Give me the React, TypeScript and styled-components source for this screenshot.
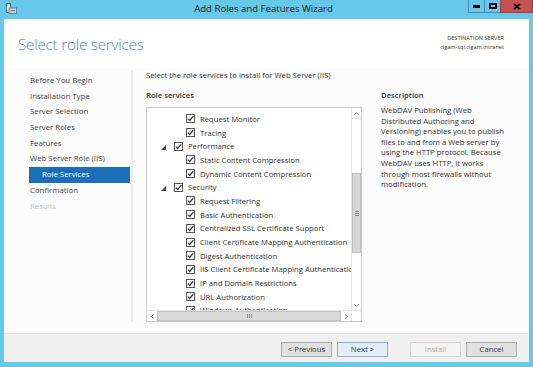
import { createGlobalStyle, styled } from "styled-components";

const GlobalStyle = createGlobalStyle`
  html, body {
    margin: 0;
    padding: 0;
    background: #66c9ea;
  }
  body {
    font-family: "Open Sans", "Noto Sans", sans-serif;
    color: #444;
  }
`;

const navItems = [
  { label: "Before You Begin" },
  { label: "Installation Type" },
  { label: "Server Selection" },
  { label: "Server Roles" },
  { label: "Features" },
  { label: "Web Server Role (IIS)" },
  { label: "Role Services", sub: true, active: true },
  { label: "Confirmation" },
  { label: "Results", disabled: true },
];

const treeRows = [
  { label: "Request Monitor", level: 2 },
  { label: "Tracing", level: 2 },
  { label: "Performance", level: 1 },
  { label: "Static Content Compression", level: 2 },
  { label: "Dynamic Content Compression", level: 2 },
  { label: "Security", level: 1 },
  { label: "Request Filtering", level: 2 },
  { label: "Basic Authentication", level: 2 },
  { label: "Centralized SSL Certificate Support", level: 2 },
  { label: "Client Certificate Mapping Authentication", level: 2 },
  { label: "Digest Authentication", level: 2 },
  { label: "IIS Client Certificate Mapping Authentication", level: 2 },
  { label: "IP and Domain Restrictions", level: 2 },
  { label: "URL Authorization", level: 2 },
  { label: "Windows Authentication", level: 2 },
];

function CheckBox() {
  return (
    <Box>
      <svg width="7" height="7" viewBox="0 0 7 7">
        <path d="M0.8 3.6 L2.7 5.5 L6.3 1.2" fill="none" stroke="#333" strokeWidth="1.2" />
      </svg>
    </Box>
  );
}

function App() {
  return (
    <>
      <GlobalStyle />
      <Window>
        <TitleBar>
          <AppIcon>
            <svg width="11" height="11" viewBox="0 0 11 11">
              <rect x="0.5" y="0.5" width="4" height="9" fill="#fff" stroke="#3d6f9e" />
              <rect x="3" y="5" width="7.5" height="5.5" fill="#c9d4de" stroke="#6b7f93" />
              <rect x="4.5" y="7" width="4.5" height="1.2" fill="#6b7f93" />
            </svg>
          </AppIcon>
          <TitleText>Add Roles and Features Wizard</TitleText>
          <WinButtons>
            <WinButton>
              <svg width="7" height="3"><rect width="7" height="3" fill="#000" /></svg>
            </WinButton>
            <WinButton>
              <svg width="8" height="6"><rect x="1" y="1" width="6" height="4" fill="none" stroke="#000" strokeWidth="2" /></svg>
            </WinButton>
            <CloseButton>
              <svg width="8" height="7" viewBox="0 0 8 7">
                <path d="M1 0.8 L7 6.2 M7 0.8 L1 6.2" stroke="#000" strokeWidth="1.8" />
              </svg>
            </CloseButton>
          </WinButtons>
        </TitleBar>
        <Client>
          <Header>
            <PageTitle>Select role services</PageTitle>
            <ServerInfo>
              <div>DESTINATION SERVER</div>
              <div>cigam-sql.cigam.intranet</div>
            </ServerInfo>
          </Header>
          <Body>
            <Nav>
              {navItems.map((item) => (
                <NavItem
                  key={item.label}
                  $sub={!!item.sub}
                  $active={!!item.active}
                  $disabled={!!item.disabled}
                >
                  {item.label}
                </NavItem>
              ))}
            </Nav>
            <Main>
              <Intro>Select the role services to install for Web Server (IIS)</Intro>
              <Columns>
                <ListColumn>
                  <SectionTitle>Role services</SectionTitle>
                  <ListBox>
                    <ListView>
                      <TreeRows>
                        {treeRows.map((row) => (
                          <TreeRow key={row.label} $level={row.level}>
                            {row.level === 1 && (
                              <Expander>
                                <svg width="5" height="5" viewBox="0 0 5 5">
                                  <polygon points="5,0 5,5 0,5" fill="#444" />
                                </svg>
                              </Expander>
                            )}
                            <CheckBox />
                            <RowLabel>{row.label}</RowLabel>
                          </TreeRow>
                        ))}
                      </TreeRows>
                      <VScroll>
                        <ArrowCell>
                          <svg width="5" height="3" viewBox="0 0 5 3">
                            <path d="M0.5 2.7 L2.5 0.7 L4.5 2.7" fill="none" stroke="#888" />
                          </svg>
                        </ArrowCell>
                        <VTrack>
                          <VThumb>
                            <Grip $vertical />
                          </VThumb>
                        </VTrack>
                        <ArrowCell>
                          <svg width="5" height="3" viewBox="0 0 5 3">
                            <path d="M0.5 0.3 L2.5 2.3 L4.5 0.3" fill="none" stroke="#888" />
                          </svg>
                        </ArrowCell>
                      </VScroll>
                    </ListView>
                    <HScroll>
                      <HArrowCell>
                        <svg width="3" height="5" viewBox="0 0 3 5">
                          <path d="M2.7 0.5 L0.7 2.5 L2.7 4.5" fill="none" stroke="#666" />
                        </svg>
                      </HArrowCell>
                      <HThumb>
                        <Grip />
                      </HThumb>
                      <HArrowCell>
                        <svg width="3" height="5" viewBox="0 0 3 5">
                          <path d="M0.3 0.5 L2.3 2.5 L0.3 4.5" fill="none" stroke="#666" />
                        </svg>
                      </HArrowCell>
                      <Corner />
                    </HScroll>
                  </ListBox>
                </ListColumn>
                <DescColumn>
                  <SectionTitle>Description</SectionTitle>
                  <DescText>
                    WebDAV Publishing (Web Distributed Authoring and Versioning) enables you to
                    publish files to and from a Web server by using the HTTP protocol. Because
                    WebDAV uses HTTP, it works through most firewalls without modification.
                  </DescText>
                </DescColumn>
              </Columns>
            </Main>
          </Body>
          <Footer>
            <Button>&lt; Previous</Button>
            <Button $focused>Next &gt;</Button>
            <Button $disabled $gap>
              Install
            </Button>
            <Button>Cancel</Button>
          </Footer>
        </Client>
      </Window>
    </>
  );
}

export default App;

const Window = styled.div`
  width: 533px;
  height: 367px;
  display: flex;
  flex-direction: column;
  background: #66c9ea;
  box-sizing: border-box;
  padding: 0 4px 5px 4px;
`;

const TitleBar = styled.div`
  height: 19px;
  display: flex;
  align-items: flex-start;
`;

const AppIcon = styled.div`
  margin: 3px 0 0 2px;
  width: 11px;
  height: 11px;
  display: flex;
`;

const TitleText = styled.div`
  flex: 1;
  text-align: center;
  font-size: 9.6px;
  line-height: 18px;
  color: #1a1a1a;
  padding-left: 42px;
`;

const WinButtons = styled.div`
  display: flex;
  margin-right: -4px;
`;

const WinButton = styled.div`
  width: 17px;
  height: 13px;
  display: flex;
  align-items: center;
  justify-content: center;
  border: 1px solid #3f8fb2;
  border-top: none;
  box-sizing: border-box;
  margin-right: -1px;
`;

const CloseButton = styled(WinButton)`
  width: 33px;
  background: #c75050;
  border-color: #9c3b3b;
  margin-right: 0;
`;

const Client = styled.div`
  flex: 1;
  display: flex;
  flex-direction: column;
  background: #fff;
  min-height: 0;
`;

const Header = styled.div`
  height: 49px;
  display: flex;
  justify-content: space-between;
  align-items: flex-start;
  padding: 0 25px 0 14px;
`;

const PageTitle = styled.div`
  font-family: "Open Sans", sans-serif;
  font-weight: 300;
  font-size: 15.2px;
  color: #4b88b5;
  margin-top: 15px;
  letter-spacing: -0.2px;
`;

const ServerInfo = styled.div`
  margin-top: 15px;
  text-align: right;
  font-size: 5.6px;
  line-height: 9px;
  color: #333;
`;

const Body = styled.div`
  flex: 1;
  display: flex;
  min-height: 0;
  background: #fcfcfc;
`;

const Nav = styled.div`
  width: 127px;
  margin-top: 2px;
  margin-bottom: 11px;
  padding-top: 3px;
  border-right: 2px solid #ececec;
  display: flex;
  flex-direction: column;
`;

const NavItem = styled.div<{ $sub: boolean; $active: boolean; $disabled: boolean }>`
  height: 15.7px;
  line-height: 15.7px;
  font-size: 7.8px;
  margin-left: 25px;
  margin-right: 1px;
  padding-left: ${(p) => (p.$sub ? "13px" : "1px")};
  background: ${(p) => (p.$active ? "#1b6fb8" : "transparent")};
  color: ${(p) => (p.$active ? "#fff" : p.$disabled ? "#c4c4c4" : "#444")};
`;

const Main = styled.div`
  flex: 1;
  padding: 2px 0 11px 13px;
  display: flex;
  flex-direction: column;
  min-width: 0;
`;

const Intro = styled.div`
  font-size: 7.7px;
  line-height: 11px;
  color: #333;
`;

const Columns = styled.div`
  flex: 1;
  display: flex;
  gap: 19px;
  min-height: 0;
  margin-top: 8px;
`;

const ListColumn = styled.div`
  width: 216px;
  display: flex;
  flex-direction: column;
`;

const SectionTitle = styled.div`
  font-size: 7.7px;
  font-weight: 600;
  line-height: 12px;
  color: #333;
  margin-bottom: 6px;
`;

const ListBox = styled.div`
  flex: 1;
  border: 1px solid #c9c9c9;
  display: flex;
  flex-direction: column;
  min-height: 0;
  background: #fff;
`;

const ListView = styled.div`
  flex: 1;
  display: flex;
  min-height: 0;
`;

const TreeRows = styled.div`
  flex: 1;
  overflow: hidden;
  padding-top: 4px;
  min-width: 0;
`;

const TreeRow = styled.div<{ $level: number }>`
  height: 13.7px;
  display: flex;
  align-items: center;
  white-space: nowrap;
  padding-left: ${(p) => (p.$level === 1 ? "14px" : "39px")};
`;

const Expander = styled.div`
  width: 13px;
  display: flex;
  align-items: center;
  margin-top: 2px;
`;

const Box = styled.div`
  width: 9px;
  height: 9px;
  box-sizing: border-box;
  border: 1px solid #555;
  background: #fff;
  display: flex;
  align-items: center;
  justify-content: center;
  flex: none;
`;

const RowLabel = styled.span`
  font-size: 7.7px;
  color: #333;
  margin-left: 5px;
`;

const VScroll = styled.div`
  width: 9px;
  display: flex;
  flex-direction: column;
  border-left: 1px solid #e6e6e6;
  background: #fff;
`;

const ArrowCell = styled.div`
  height: 10px;
  display: flex;
  align-items: center;
  justify-content: center;
`;

const VTrack = styled.div`
  flex: 1;
  display: flex;
  flex-direction: column;
  padding-top: 54px;
  border-top: 1px solid #e6e6e6;
`;

const VThumb = styled.div`
  height: 78px;
  background: #d6d6d6;
  border: 1px solid #c2c2c2;
  display: flex;
  align-items: center;
  justify-content: center;
`;

const Grip = styled.div<{ $vertical?: boolean }>`
  width: ${(p) => (p.$vertical ? "4px" : "5px")};
  height: ${(p) => (p.$vertical ? "5px" : "4px")};
  background: ${(p) =>
    p.$vertical
      ? "repeating-linear-gradient(to bottom, #888 0 1px, transparent 1px 2px)"
      : "repeating-linear-gradient(to right, #888 0 1px, transparent 1px 2px)"};
`;

const HScroll = styled.div`
  height: 10px;
  display: flex;
  border-top: 1px solid #e6e6e6;
`;

const HArrowCell = styled.div`
  width: 10px;
  display: flex;
  align-items: center;
  justify-content: center;
`;

const HThumb = styled.div`
  flex: 1;
  background: #d9d9d9;
  border: 1px solid #c2c2c2;
  display: flex;
  align-items: center;
  justify-content: center;
`;

const Corner = styled.div`
  width: 9px;
  background: #fff;
  border-left: 1px solid #e6e6e6;
`;

const DescColumn = styled.div`
  width: 128px;
  display: flex;
  flex-direction: column;
`;

const DescText = styled.div`
  font-size: 7.7px;
  line-height: 10.6px;
  color: #333;
  margin-top: -2px;
`;

const Footer = styled.div`
  height: 28px;
  border-top: 1px solid #e4e4e4;
  background: #f0f0f0;
  display: flex;
  align-items: center;
  justify-content: flex-end;
  padding-right: 12px;
  gap: 5px;
`;

const Button = styled.div<{ $focused?: boolean; $disabled?: boolean; $gap?: boolean }>`
  width: 51px;
  height: 15px;
  box-sizing: border-box;
  margin-left: ${(p) => (p.$gap ? "17px" : "0")};
  border: 1px solid ${(p) => (p.$focused ? "#7eb4ea" : p.$disabled ? "#d3d3d3" : "#adadad")};
  background: ${(p) => (p.$disabled ? "#f4f4f4" : p.$focused ? "#e5eef7" : "#e1e1e1")};
  color: ${(p) => (p.$disabled ? "#adadad" : "#333")};
  font-size: 7.7px;
  display: flex;
  align-items: center;
  justify-content: center;
  margin-top: 2px;
`;
